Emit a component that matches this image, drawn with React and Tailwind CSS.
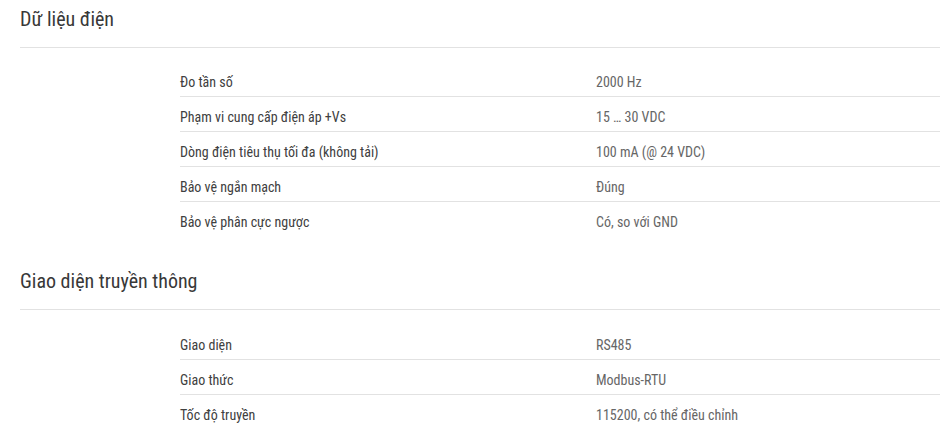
const sections = [
  {
    title: 'Dữ liệu điện',
    rows: [
      ['Đo tần số', '2000 Hz'],
      ['Phạm vi cung cấp điện áp +Vs', '15 … 30 VDC'],
      ['Dòng điện tiêu thụ tối đa (không tải)', '100 mA (@ 24 VDC)'],
      ['Bảo vệ ngắn mạch', 'Đúng'],
      ['Bảo vệ phân cực ngược', 'Có, so với GND'],
    ],
  },
  {
    title: 'Giao diện truyền thông',
    rows: [
      ['Giao diện', 'RS485'],
      ['Giao thức', 'Modbus-RTU'],
      ['Tốc độ truyền', '115200, có thể điều chỉnh'],
    ],
  },
];

export default function App() {
  return (
    <div
      className="min-h-[442px] w-full bg-white pl-5 pr-[2px] font-normal text-[#333] [font-stretch:condensed]"
      style={{ fontFamily: '"Roboto Condensed", Roboto, "Liberation Sans", sans-serif' }}
    >
      {sections.map((section, i) => (
        <section key={section.title} className={i > 0 ? 'mt-[25px]' : ''}>
          <h2 className="flex h-[48px] items-center border-b border-[#e2e2e2] pb-[10px] text-[20px] text-[#383838]">
            {section.title}
          </h2>
          <div className={`${i > 0 ? 'mt-[15px]' : 'mt-[14px]'} pl-[160px]`}>
            {section.rows.map(([label, value]) => (
              <div
                key={label}
                className="flex h-[35px] items-center border-b border-[#e2e2e2] pt-[6px] text-[14px] last:border-0"
              >
                <div className="w-[416px] text-[#404040]">{label}</div>
                <div className="text-[#666]">{value}</div>
              </div>
            ))}
          </div>
        </section>
      ))}
    </div>
  );
}
